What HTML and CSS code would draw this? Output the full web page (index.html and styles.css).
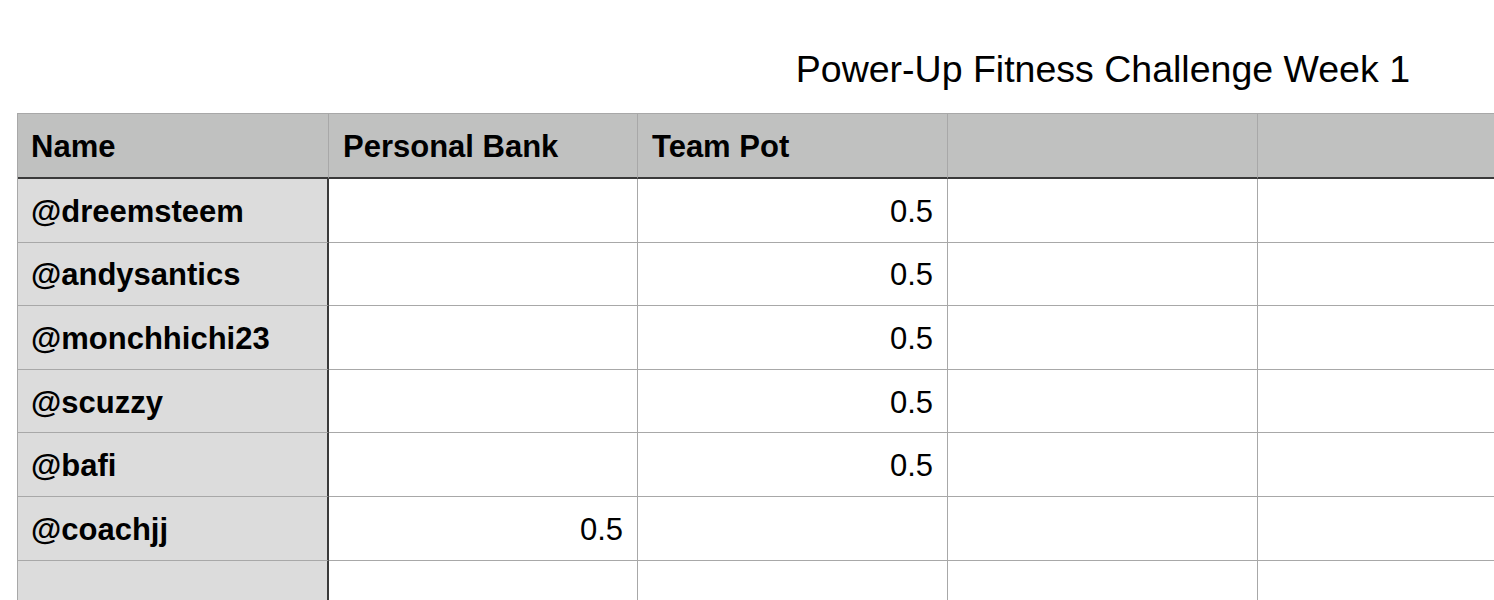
FILE: index.html
```html
<!DOCTYPE html>
<html>
<head>
<meta charset="utf-8">
<link rel="stylesheet" href="styles.css">
</head>
<body>
<div class="page">
  <div class="title">Power-Up Fitness Challenge Week 1</div>
  <div class="sheet">
    <div class="cell head name-col">Name</div>
    <div class="cell head">Personal Bank</div>
    <div class="cell head">Team Pot</div>
    <div class="cell head"></div>
    <div class="cell head"></div>

    <div class="cell name-col">@dreemsteem</div>
    <div class="cell"></div>
    <div class="cell num">0.5</div>
    <div class="cell"></div>
    <div class="cell"></div>

    <div class="cell name-col">@andysantics</div>
    <div class="cell"></div>
    <div class="cell num">0.5</div>
    <div class="cell"></div>
    <div class="cell"></div>

    <div class="cell name-col">@monchhichi23</div>
    <div class="cell"></div>
    <div class="cell num">0.5</div>
    <div class="cell"></div>
    <div class="cell"></div>

    <div class="cell name-col">@scuzzy</div>
    <div class="cell"></div>
    <div class="cell num">0.5</div>
    <div class="cell"></div>
    <div class="cell"></div>

    <div class="cell name-col">@bafi</div>
    <div class="cell"></div>
    <div class="cell num">0.5</div>
    <div class="cell"></div>
    <div class="cell"></div>

    <div class="cell name-col">@coachjj</div>
    <div class="cell num">0.5</div>
    <div class="cell"></div>
    <div class="cell"></div>
    <div class="cell"></div>

    <div class="cell name-col"></div>
    <div class="cell"></div>
    <div class="cell"></div>
    <div class="cell"></div>
    <div class="cell"></div>
  </div>
</div>
</body>
</html>
```

FILE: styles.css
```css
html, body {
  margin: 0;
  padding: 0;
  background: #ffffff;
  overflow: hidden;
}

.page {
  width: 1494px;
  height: 600px;
  overflow: hidden;
  font-family: "Liberation Sans", Arial, sans-serif;
  color: #000;
}

.title {
  box-sizing: border-box;
  height: 113px;
  padding-top: 47px;
  padding-right: 84px;
  text-align: right;
  font-size: 37.5px;
  line-height: 44px;
  white-space: nowrap;
}

.sheet {
  margin-left: 17px;
  display: grid;
  grid-template-columns: 311px 309px 310px 310px 310px;
  grid-template-rows: 65px repeat(7, 63.6px);
  width: max-content;
  border-top: 1px solid #a8a8a8;
  border-left: 1px solid #a8a8a8;
}

.cell {
  box-sizing: border-box;
  display: flex;
  align-items: center;
  padding: 3px 14px 0 14px;
  border-right: 1px solid #a8a8a8;
  border-bottom: 1px solid #a8a8a8;
  font-size: 31px;
  white-space: nowrap;
  background: #ffffff;
}

.head {
  background: #c0c1c0;
  font-weight: bold;
  border-bottom: 2px solid #3a3a3a;
  padding-top: 2px;
}

.name-col {
  background: #dcdcdc;
  font-weight: bold;
  border-right: 2px solid #3a3a3a;
  padding-left: 13px;
}

.head.name-col {
  background: #c0c1c0;
  border-right: 1px solid #a8a8a8;
}

.num {
  justify-content: flex-end;
}
```
